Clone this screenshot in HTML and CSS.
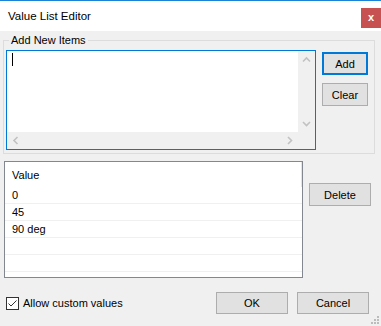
FILE: index.html
```html
<!DOCTYPE html>
<html lang="en">
<head>
  <meta charset="UTF-8" />
  <title>Value List Editor</title>
  <link rel="stylesheet" href="styles.css">
</head>
<body>

  <div class="window">
    <div class="titlebar">
      <span class="title">Value List Editor</span>
      <span class="close">x</span>
    </div>

    <div class="content">
      <fieldset class="group">
        <legend>Add New Items</legend>
        <div class="group-row">
          <div class="editbox">
            <div class="edit-area"><span class="caret"></span></div>
            <div class="vscroll">
              <svg width="17" height="17" viewBox="0 0 17 17"><path d="M5 10.5 L8.5 7 L12 10.5" fill="none" stroke="#c2c2c2" stroke-width="1.6"/></svg>
              <svg width="17" height="17" viewBox="0 0 17 17"><path d="M5 7 L8.5 10.5 L12 7" fill="none" stroke="#c2c2c2" stroke-width="1.6"/></svg>
            </div>
            <div class="hscroll">
              <svg width="17" height="17" viewBox="0 0 17 17"><path d="M10.5 5 L7 8.5 L10.5 12" fill="none" stroke="#c2c2c2" stroke-width="1.6"/></svg>
              <svg width="17" height="17" viewBox="0 0 17 17"><path d="M7 5 L10.5 8.5 L7 12" fill="none" stroke="#c2c2c2" stroke-width="1.6"/></svg>
            </div>
            <div class="corner"></div>
          </div>
          <div class="btn-col">
            <button class="btn default">Add</button>
            <button class="btn">Clear</button>
          </div>
        </div>
      </fieldset>

      <div class="list-row">
        <div class="listview">
          <div class="lv-header"><span class="lv-col">Value</span></div>
          <div class="lv-item">0</div>
          <div class="lv-item">45</div>
          <div class="lv-item">90 deg</div>
          <div class="lv-item"></div>
          <div class="lv-item"></div>
          <div class="lv-item"></div>
        </div>
        <button class="btn delete">Delete</button>
      </div>

      <div class="footer">
        <label class="check">
          <svg width="13" height="13" viewBox="0 0 13 13">
            <rect x="0.5" y="0.5" width="12" height="12" fill="#fff" stroke="#333"/>
            <path d="M2.5 6.5 L5 9 L10.5 3.5" fill="none" stroke="#333" stroke-width="1"/>
          </svg>
          Allow custom values
        </label>
        <button class="btn wide">OK</button>
        <button class="btn wide">Cancel</button>
      </div>
    </div>

    <svg class="grip" width="9" height="9" viewBox="0 0 9 9">
      <rect x="6" y="0" width="2" height="2" fill="#bcbcbc"/>
      <rect x="3" y="3" width="2" height="2" fill="#bcbcbc"/>
      <rect x="6" y="3" width="2" height="2" fill="#bcbcbc"/>
      <rect x="0" y="6" width="2" height="2" fill="#bcbcbc"/>
      <rect x="3" y="6" width="2" height="2" fill="#bcbcbc"/>
      <rect x="6" y="6" width="2" height="2" fill="#bcbcbc"/>
    </svg>
  </div>

</body>
</html>
```

FILE: styles.css
```css
body {
  margin: 0;
  font-family: "Liberation Sans", Arial, sans-serif;
  font-size: 11px;
  color: #000;
}

.window {
  position: relative;
  width: 381px;
  height: 326px;
  background: #f0f0f0;
  overflow: hidden;
}

.titlebar {
  display: flex;
  align-items: flex-start;
  justify-content: space-between;
  height: 30px;
  border-top: 1px solid #1883d7;
  background: #fff;
}

.title {
  font-size: 11.5px;
  line-height: 14px;
  margin: 8px 0 0 8px;
}

.close {
  width: 20px;
  height: 20px;
  margin-top: 7px;
  background: #c75050;
  color: #fff;
  font-weight: bold;
  font-size: 11px;
  line-height: 18px;
  text-align: center;
}

.content {
  padding: 3px 6px 0 3px;
}

/* group box */
.group {
  margin: 0;
  padding: 0 6px 3px 2px;
  border: 1px solid #dcdcdc;
  min-inline-size: 0;
}

.group legend {
  margin-left: 3px;
  padding: 0 2px;
  line-height: 13px;
}

.group-row {
  display: flex;
  padding-top: 3px;
}

.editbox {
  display: grid;
  grid-template-columns: 1fr 17px;
  grid-template-rows: 1fr 17px;
  width: 310px;
  height: 100px;
  box-sizing: border-box;
  border: 1px solid #0078d7;
  background: #fff;
}

.edit-area {
  padding: 2px 0 0 5px;
}

.caret {
  display: block;
  width: 1px;
  height: 13px;
  background: #000;
}

.vscroll {
  display: flex;
  flex-direction: column;
  justify-content: space-between;
  background: #f0f0f0;
}

.hscroll {
  display: flex;
  justify-content: space-between;
  background: #f0f0f0;
}

.corner {
  background: #f0f0f0;
}

.btn-col {
  display: flex;
  flex-direction: column;
  gap: 8px;
  margin: 2px 0 0 6px;
}

/* buttons */
.btn {
  width: 46px;
  height: 23px;
  padding: 0;
  box-sizing: border-box;
  font-family: inherit;
  font-size: 11px;
  color: #000;
  background: #e1e1e1;
  border: 1px solid #adadad;
}

.btn.default {
  border: 2px solid #0078d7;
}

.btn.delete {
  width: 62px;
  margin: 22px 0 0 6px;
}

.btn.wide {
  width: 72px;
  height: 22px;
}

/* list view */
.list-row {
  display: flex;
  align-items: flex-start;
  margin-top: 7px;
  padding-left: 1px;
}

.listview {
  width: 299px;
  height: 117px;
  box-sizing: border-box;
  border: 1px solid #828790;
  background: #fff;
  overflow: hidden;
}

.lv-header {
  height: 25px;
  display: flex;
  align-items: center;
  border-right: 1px solid #e5e5e5;
  padding-left: 7px;
}

.lv-item {
  height: 16px;
  line-height: 16px;
  padding-left: 7px;
  border-bottom: 1px solid #f0f0f0;
}

/* bottom row */
.footer {
  display: flex;
  align-items: center;
  gap: 9px;
  margin: 14px 6px 0 3px;
}

.check {
  display: flex;
  align-items: center;
  gap: 4px;
  margin-right: auto;
}

.grip {
  position: absolute;
  right: 1px;
  bottom: 1px;
}
```
